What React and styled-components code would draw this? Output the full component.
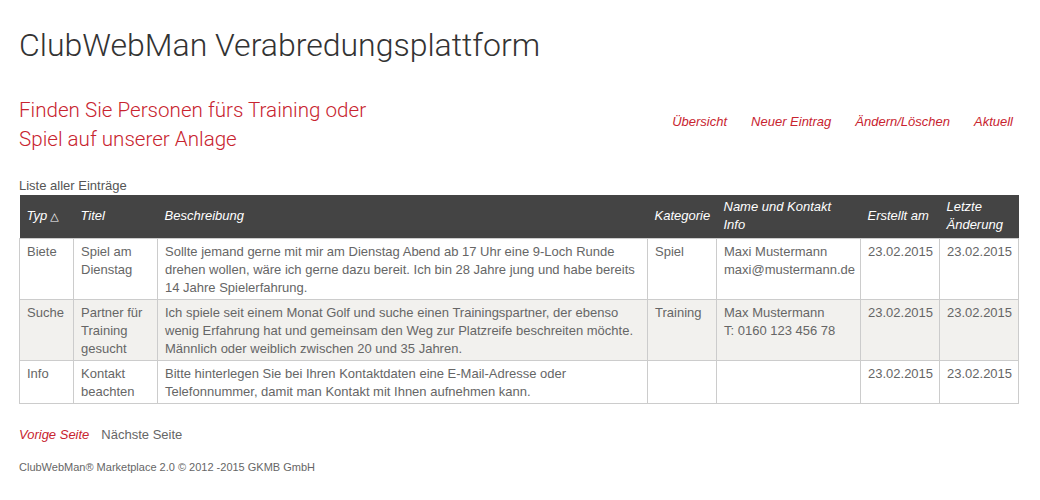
import React from 'react';
import styled, { createGlobalStyle } from 'styled-components';

const GlobalStyle = createGlobalStyle`
  html, body {
    margin: 0;
    padding: 0;
    background: #fff;
  }
  body {
    font-family: "Liberation Sans", Arial, sans-serif;
    font-size: 13px;
    color: #666;
  }
`;

const red = '#c8242f';

const Page = styled.div`
  width: 999px;
  padding: 26px 0 0 19px;
`;

const Title = styled.h1`
  margin: 0;
  font-family: Roboto, "Liberation Sans", sans-serif;
  font-weight: 300;
  font-size: 32px;
  line-height: 38px;
  color: #333;
`;

const Intro = styled.div`
  display: flex;
  align-items: center;
  justify-content: space-between;
  margin-top: 32px;
`;

const Slogan = styled.h2`
  margin: 0;
  width: 372px;
  font-family: Roboto, "Liberation Sans", sans-serif;
  font-weight: 300;
  font-size: 20.6px;
  line-height: 29px;
  color: ${red};
`;

const Nav = styled.nav`
  display: flex;
  gap: 24px;
  padding: 0 5px 8px 0;
`;

const NavLink = styled.a`
  font-style: italic;
  color: ${red};
  text-decoration: none;
  cursor: pointer;
`;

const Caption = styled.div`
  margin-top: 23px;
  line-height: 18px;
  color: #555;
`;

const Table = styled.table`
  width: 999px;
  table-layout: fixed;
  border-collapse: collapse;
  line-height: 18px;
`;

const Th = styled.th`
  background: #444;
  color: #fff;
  font-weight: normal;
  font-style: italic;
  text-align: left;
  vertical-align: middle;
  height: 43px;
  padding: 0 7px;
  box-sizing: border-box;
`;

const Sort = styled.span`
  font-style: normal;
  font-family: "DejaVu Sans", sans-serif;
  font-size: 11px;
  margin-left: 3px;
`;

const Row = styled.tr`
  background: ${(p) => (p.$striped ? '#f2f1ee' : '#fff')};
`;

const Td = styled.td`
  border: 1px solid #ccc;
  padding: 4px 7px 2px;
  vertical-align: top;
  color: #666;
`;

const Pager = styled.div`
  display: flex;
  gap: 12px;
  margin-top: 23px;
  line-height: 16px;
`;

const PagerLink = styled.a`
  color: ${(p) => (p.$active ? red : '#666')};
  font-style: ${(p) => (p.$active ? 'italic' : 'normal')};
  text-decoration: none;
`;

const Footer = styled.footer`
  margin-top: 17px;
  font-size: 11px;
  line-height: 14px;
  color: #666;
`;

const columns = [
  { label: 'Typ', width: 54, sort: true },
  { label: 'Titel', width: 84 },
  { label: 'Beschreibung', width: 490 },
  { label: 'Kategorie', width: 69 },
  { label: 'Name und Kontakt Info', width: 144 },
  { label: 'Erstellt am', width: 79 },
  { label: 'Letzte Änderung', width: 79 },
];

const entries = [
  {
    typ: 'Biete',
    titel: 'Spiel am Dienstag',
    text: 'Sollte jemand gerne mit mir am Dienstag Abend ab 17 Uhr eine 9-Loch Runde drehen wollen, wäre ich gerne dazu bereit. Ich bin 28 Jahre jung und habe bereits 14 Jahre Spielerfahrung.',
    kategorie: 'Spiel',
    kontakt: ['Maxi Mustermann', 'maxi@mustermann.de'],
    erstellt: '23.02.2015',
    geaendert: '23.02.2015',
  },
  {
    typ: 'Suche',
    titel: 'Partner für Training gesucht',
    text: 'Ich spiele seit einem Monat Golf und suche einen Trainingspartner, der ebenso wenig Erfahrung hat und gemeinsam den Weg zur Platzreife beschreiten möchte. Männlich oder weiblich zwischen 20 und 35 Jahren.',
    kategorie: 'Training',
    kontakt: ['Max Mustermann', 'T: 0160 123 456 78'],
    erstellt: '23.02.2015',
    geaendert: '23.02.2015',
  },
  {
    typ: 'Info',
    titel: 'Kontakt beachten',
    text: 'Bitte hinterlegen Sie bei Ihren Kontaktdaten eine E-Mail-Adresse oder Telefonnummer, damit man Kontakt mit Ihnen aufnehmen kann.',
    kategorie: '',
    kontakt: [],
    erstellt: '23.02.2015',
    geaendert: '23.02.2015',
  },
];

export default function App() {
  return (
    <>
      <GlobalStyle />
      <Page>
        <Title>ClubWebMan Verabredungsplattform</Title>

        <Intro>
          <Slogan>Finden Sie Personen fürs Training oder Spiel auf unserer Anlage</Slogan>
          <Nav>
            <NavLink>Übersicht</NavLink>
            <NavLink>Neuer Eintrag</NavLink>
            <NavLink>Ändern/Löschen</NavLink>
            <NavLink>Aktuell</NavLink>
          </Nav>
        </Intro>

        <Caption>Liste aller Einträge</Caption>
        <Table>
          <colgroup>
            {columns.map((c) => (
              <col key={c.label} style={{ width: c.width }} />
            ))}
          </colgroup>
          <thead>
            <tr>
              {columns.map((c) => (
                <Th key={c.label}>
                  {c.label}
                  {c.sort && <Sort>△</Sort>}
                </Th>
              ))}
            </tr>
          </thead>
          <tbody>
            {entries.map((e, i) => (
              <Row key={e.typ} $striped={i % 2 === 1}>
                <Td>{e.typ}</Td>
                <Td>{e.titel}</Td>
                <Td>{e.text}</Td>
                <Td>{e.kategorie}</Td>
                <Td>
                  {e.kontakt.map((line) => (
                    <div key={line}>{line}</div>
                  ))}
                </Td>
                <Td>{e.erstellt}</Td>
                <Td>{e.geaendert}</Td>
              </Row>
            ))}
          </tbody>
        </Table>

        <Pager>
          <PagerLink $active>Vorige Seite</PagerLink>
          <PagerLink>Nächste Seite</PagerLink>
        </Pager>

        <Footer>ClubWebMan® Marketplace 2.0 © 2012 -2015 GKMB GmbH</Footer>
      </Page>
    </>
  );
}
